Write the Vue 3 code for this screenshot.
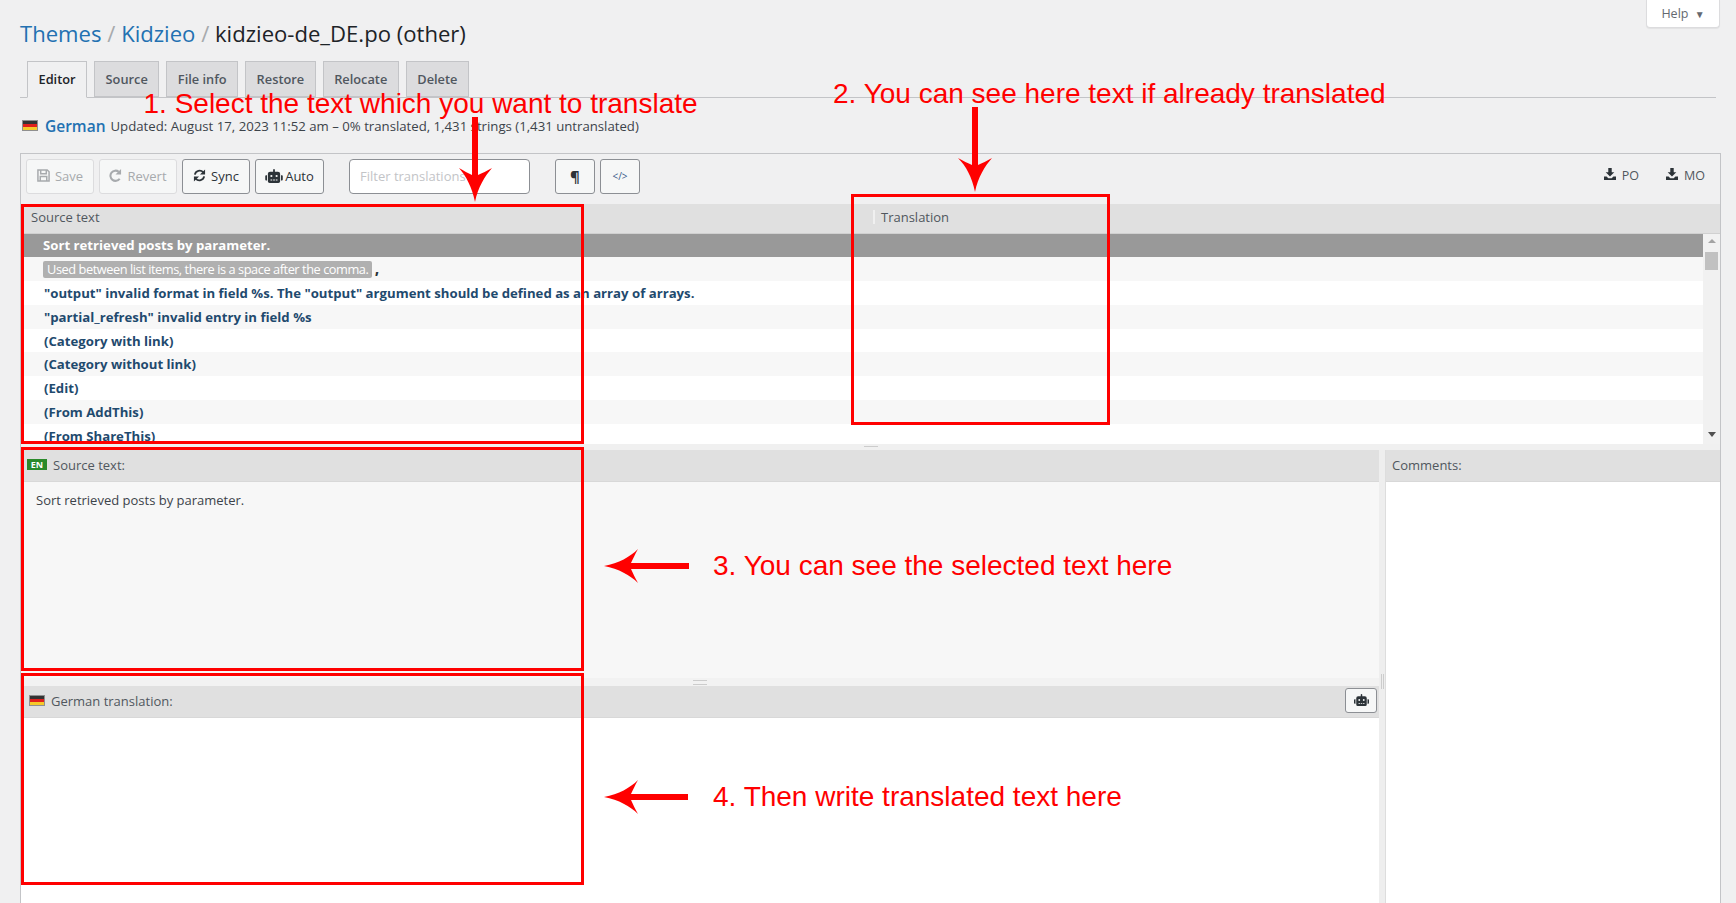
<script setup>
const tabs = ['Editor', 'Source', 'File info', 'Restore', 'Relocate', 'Delete']
const rows = [
  '"output" invalid format in field %s. The "output" argument should be defined as an array of arrays.',
  '"partial_refresh" invalid entry in field %s',
  '(Category with link)',
  '(Category without link)',
  '(Edit)',
  '(From AddThis)',
  '(From ShareThis)'
]
const robot = 'M32,224H64V416H32A32,32,0,0,1,0,384V256A32,32,0,0,1,32,224Zm512-48V448a64,64,0,0,1-64,64H160a64,64,0,0,1-64-64V176a80,80,0,0,1,80-80H288V32a32,32,0,0,1,64,0V96H464A80,80,0,0,1,544,176ZM264,256a40,40,0,1,0-40,40A40,40,0,0,0,264,256Zm-8,128H192v32h64Zm96,0H288v32h64ZM456,256a40,40,0,1,0-40,40A40,40,0,0,0,456,256Zm-8,128H384v32h64ZM640,256V384a32,32,0,0,1-32,32H576V224h32A32,32,0,0,1,640,256Z'
const download = 'M5 0h4v5h3L7 10 2 5h3zM0 10h3l2 2h4l2-2h3v4H0z'
</script>

<template>
  <div class="page">
    <div class="top">
      <h1 class="title">
        <a>Themes</a> <span class="sep">/</span> <a>Kidzieo</a> <span class="sep">/</span> <span>kidzieo-de_DE.po (other)</span>
      </h1>
      <button class="help">Help <span class="help-caret">▼</span></button>
    </div>

    <div class="tabs">
      <span v-for="(t, i) in tabs" :key="t" class="tab" :class="{ active: i === 0 }">{{ t }}</span>
    </div>

    <div class="lang">
      <span class="flag"></span>
      <a class="lang-name">German</a>
      <span class="lang-info">Updated: August 17, 2023 11:52 am – 0% translated, 1,431 strings (1,431 untranslated)</span>
    </div>

    <div class="panel">
      <div class="toolbar">
        <button class="btn off b-save">
          <svg width="13" height="13" viewBox="0 0 14 14"><path fill="none" stroke="currentColor" stroke-width="1.6" d="M1 1h10l2 2v10H1zM4 1v4h6V1M3.5 13V8h7v5"/></svg>
          Save
        </button>
        <button class="btn off b-revert">
          <svg width="13" height="13" viewBox="0 0 14 14"><path fill="none" stroke="currentColor" stroke-width="2.2" d="M11.5 10.5A5.5 5.5 0 1 1 10.5 3"/><path fill="currentColor" d="M13 0v6H7z"/></svg>
          Revert
        </button>
        <button class="btn b-sync">
          <svg width="13" height="13" viewBox="0 0 14 14"><path fill="none" stroke="currentColor" stroke-width="2" d="M2 6a5.2 5.2 0 0 1 9-2.500M12 8a5.2 5.2 0 0 1-9 2.500"/><path fill="currentColor" d="M13 .5V6H7.500zM1 13.500V8h5.500z"/></svg>
          Sync
        </button>
        <button class="btn b-auto">
          <svg width="18" height="14" viewBox="0 0 640 512"><path fill="currentColor" :d="robot"/></svg>
          Auto
        </button>
        <input class="filter" placeholder="Filter translations" />
        <button class="btn square"><span class="pilcrow">¶</span></button>
        <button class="btn square code">&lt;/&gt;</button>
        <div class="downloads">
          <span class="dl"><svg width="12" height="12" viewBox="0 0 14 14"><path fill="currentColor" :d="download"/></svg> PO</span>
          <span class="dl"><svg width="12" height="12" viewBox="0 0 14 14"><path fill="currentColor" :d="download"/></svg> MO</span>
        </div>
      </div>

      <div class="cols">
        <div class="col-source">Source text</div>
        <div class="col-target">Translation</div>
      </div>

      <div class="list-wrap">
        <div class="list">
          <div class="row selected">Sort retrieved posts by parameter.</div>
          <div class="row alt ctx-row"><span class="ctx">Used between list items, there is a space after the comma.</span> <b class="comma">,</b></div>
          <div v-for="(r, i) in rows" :key="r" class="row" :class="{ alt: i % 2 === 1 }">{{ r }}</div>
        </div>
        <div class="scrollbar">
          <span class="sb-up"></span>
          <span class="sb-thumb"></span>
          <span class="sb-down"></span>
        </div>
      </div>

      <div class="hsplit"><span class="grip"></span></div>

      <div class="lower">
        <div class="editor">
          <div class="pane-head"><span class="en">EN</span> Source text:</div>
          <div class="source-body">Sort retrieved posts by parameter.</div>
          <div class="hsplit2"><span class="grip"></span></div>
          <div class="pane-head target-head">
            <span class="flag"></span> German translation:
            <button class="btn robot-btn"><svg width="15" height="12" viewBox="0 0 640 512"><path fill="currentColor" :d="robot"/></svg></button>
          </div>
          <div class="target-body"></div>
        </div>
        <div class="vsplit"><span class="vgrip"></span></div>
        <div class="comments">
          <div class="pane-head">Comments:</div>
        </div>
      </div>
    </div>

    <!-- red annotations drawn over the screenshot -->
    <div class="box box1"></div>
    <div class="box box2"></div>
    <div class="box box3"></div>
    <div class="box box4"></div>
    <div class="note note1">1. Select the text which you want to translate</div>
    <div class="note note2">2. You can see here text if already translated</div>
    <div class="note note3">3. You can see the selected text here</div>
    <div class="note note4">4. Then write translated text here</div>
    <svg class="arrows" width="1736" height="903" viewBox="0 0 1736 903">
      <path fill="#f00" d="M475 202C472 187 466 176 459 168C464 171 468 173 472 175V117H478V175C482 173 487 171 492 168C485 176 478 187 475 202Z"/>
      <path fill="#f00" d="M975 192C972 177 966 166 958 158C963 161 968 163 972 165V107H978V165C982 163 987 161 992 158C985 166 978 177 975 192Z"/>
      <path fill="#f00" d="M604 566C619 563 630 557 638 549C635 554 633 559 631 563H689V569H631C633 573 635 578 638 583C630 575 619 569 604 566Z"/>
      <path fill="#f00" d="M604 797C619 794 630 788 638 780C635 785 633 790 631 794H688V800H631C633 804 635 809 638 814C630 806 619 800 604 797Z"/>
    </svg>
  </div>
</template>

<style scoped>
.page { position: relative; width: 1736px; height: 903px; overflow: hidden; background: #f0f0f1; padding-left: 20px; box-sizing: border-box; font-family: "Open Sans", "Noto Sans", sans-serif; font-size: 13px; color: #3c434a; }
.top { display: flex; justify-content: space-between; align-items: flex-start; height: 61px; padding-right: 16px; }
.title { margin: 19px 0 0; font-size: 22.1px; line-height: 29px; font-weight: 400; color: #1d2327; }
.title a { color: #2271b1; }
.sep { color: #a7aaad; }
.help { width: 74px; height: 28px; border: 1px solid #dcdcde; border-top: none; border-radius: 0 0 4px 4px; background: #fff; box-shadow: 0 1px 1px rgba(0,0,0,.06); color: #646970; font: 12.5px "Open Sans", sans-serif; padding: 0; }
.help-caret { font-size: 10px; margin-left: 3px; }
.tabs { display: flex; gap: 7px; height: 36px; margin-right: 20px; padding-left: 7px; border-bottom: 1px solid #c3c4c7; }
.tab { height: 36px; box-sizing: border-box; padding: 0 10.5px; line-height: 35px; background: #dcdcde; border: 1px solid #c3c4c7; color: #50575e; font-size: 12.8px; font-weight: 600; white-space: nowrap; }
.tab.active { background: #f0f0f1; border-bottom-color: #f0f0f1; color: #1d2327; height: 37px; }
.lang { display: flex; align-items: center; height: 55px; padding-left: 2px; box-sizing: border-box; }
.flag { display: inline-block; width: 16px; height: 11px; box-sizing: border-box; border: 1px solid #8f8f8f; background: linear-gradient(#333 0 33%, #e0201c 33% 66%, #f5c92a 66%); }
.lang-name { margin-left: 7px; font-size: 15.5px; font-weight: 600; color: #2271b1; }
.lang-info { margin-left: 5px; font-size: 13.2px; }
.panel { width: 1701px; height: 751px; box-sizing: border-box; border: 1px solid #c3c4c7; border-bottom: none; }
.toolbar { display: flex; align-items: flex-start; height: 50px; padding: 5px 5px 0; box-sizing: border-box; }
.btn { display: inline-flex; align-items: center; justify-content: center; gap: 5px; height: 35px; box-sizing: border-box; padding: 0 0 2px; border: 1px solid #8c8f94; border-radius: 3px; background: #f6f7f7; color: #2c3338; font: 13px "Open Sans", sans-serif; margin-right: 5px; }
.b-save { width: 68px; }
.b-revert { width: 78px; }
.b-sync { width: 68px; }
.b-auto { width: 69px; margin-right: 25px; gap: 2px; }
.btn.off { border-color: #dcdcde; color: #a7aaad; }
.filter { width: 181px; height: 35px; box-sizing: border-box; margin-right: 25px; padding: 0 10px 2px; border: 1px solid #8c8f94; border-radius: 4px; background: #fff; font: 13px "Open Sans", sans-serif; }
.filter::placeholder { color: #c3c4c7; }
.square { width: 40px; }
.pilcrow { font-size: 15px; font-weight: 700; color: #2c3338; }
.code { font-size: 10px; color: #3a5a8a; }
.downloads { display: flex; gap: 27px; height: 33px; align-items: center; margin-left: auto; padding-right: 10px; color: #50575e; }
.dl { display: inline-flex; align-items: center; gap: 6px; font-size: 12.5px; }
.dl svg { color: #2c3338; margin-top: -3px; }
.cols { display: flex; height: 29.5px; box-sizing: border-box; background: #e0e0e0; border-bottom: 1px solid #d0d0d0; line-height: 27px; color: #50575e; }
.col-source { width: 852px; padding-left: 10px; box-sizing: border-box; }
.col-target { padding-left: 6px; border-left: 2px solid #f0f0f0; line-height: 14px; height: 14px; margin-top: 6px; }
.list-wrap { display: flex; height: 210.5px; overflow: hidden; background: #fff; }
.list { flex: 1; overflow: hidden; }
.row { height: 23.8px; line-height: 25px; padding-left: 23px; box-sizing: border-box; font-weight: 700; color: #1f4a6e; font-size: 13.2px; white-space: nowrap; background: #fff; }
.row.alt { background: #f7f7f7; }
.row.selected { background: #999; color: #fff; padding-left: 22px; line-height: 23px; }
.row.ctx-row { padding-left: 22px; }
.ctx { display: inline-block; height: 17px; line-height: 17px; padding: 0 4px; background: #b0b0b0; border-radius: 2px; color: #fff; font-weight: 400; font-size: 12.8px; letter-spacing: -.45px; }
.comma { margin-left: -1px; color: #2c3338; }
.scrollbar { width: 17px; background: #f1f1f1; display: flex; flex-direction: column; align-items: center; }
.sb-up { width: 0; height: 0; margin-top: 5px; border: 4px solid transparent; border-top: none; border-bottom: 4px solid #a3a3a3; }
.sb-thumb { width: 13px; height: 18px; margin-top: 9px; background: #c1c1c1; }
.sb-down { width: 0; height: 0; margin-top: auto; margin-bottom: 7px; border: 4px solid transparent; border-bottom: none; border-top: 5px solid #505050; }
.hsplit { display: flex; justify-content: center; height: 6px; background: #f0f0f0; }
.grip { display: block; width: 14px; height: 3px; margin-top: 2px; border-top: 1px solid #ccc; border-bottom: 1px solid #ccc; box-sizing: content-box; }
.lower { display: flex; height: 454px; }
.editor { width: 1358px; display: flex; flex-direction: column; }
.pane-head { display: flex; align-items: center; height: 32px; flex: none; padding: 0 0 2px 6px; gap: 6px; box-sizing: border-box; background: #e0e0e0; border-bottom: 1px solid #d8d8d8; color: #50575e; }
.en { display: inline-block; width: 20px; height: 11px; background: #2b8a2b; color: #fff; font-size: 9px; line-height: 11px; font-weight: 700; text-align: center; }
.source-body { height: 196px; flex: none; padding: 9px 15px; box-sizing: border-box; background: #f7f7f7; }
.hsplit2 { display: flex; justify-content: center; height: 8px; flex: none; background: #f2f2f2; }
.target-head { padding-left: 8px; }
.robot-btn { width: 32px; height: 25px; margin: 0 2px 0 auto; }
.target-body { flex: 1; background: #fff; }
.vsplit { position: relative; width: 7px; flex: none; background: #eee; border-right: 1px solid #ddd; box-sizing: border-box; }
.vgrip { position: absolute; left: 2px; top: 224px; width: 1px; height: 15px; border-left: 1px solid #ccc; border-right: 1px solid #ccc; }
.comments { flex: 1; background: #fff; }
.box { position: absolute; box-sizing: border-box; border: 3px solid #f00; }
.box1 { left: 21px; top: 204px; width: 563px; height: 240px; }
.box2 { left: 851px; top: 194px; width: 259px; height: 231px; }
.box3 { left: 21px; top: 447px; width: 563px; height: 224px; }
.box4 { left: 21px; top: 673px; width: 563px; height: 212px; }
.note { position: absolute; color: #f00; font-family: "Liberation Sans", Arial, sans-serif; font-size: 28px; line-height: 32px; white-space: nowrap; }
.note1 { left: 143.5px; top: 88px; }
.note2 { left: 833px; top: 78px; }
.note3 { left: 713px; top: 550px; }
.note4 { left: 713px; top: 781px; }
.arrows { position: absolute; left: 0; top: 0; pointer-events: none; }
</style>
